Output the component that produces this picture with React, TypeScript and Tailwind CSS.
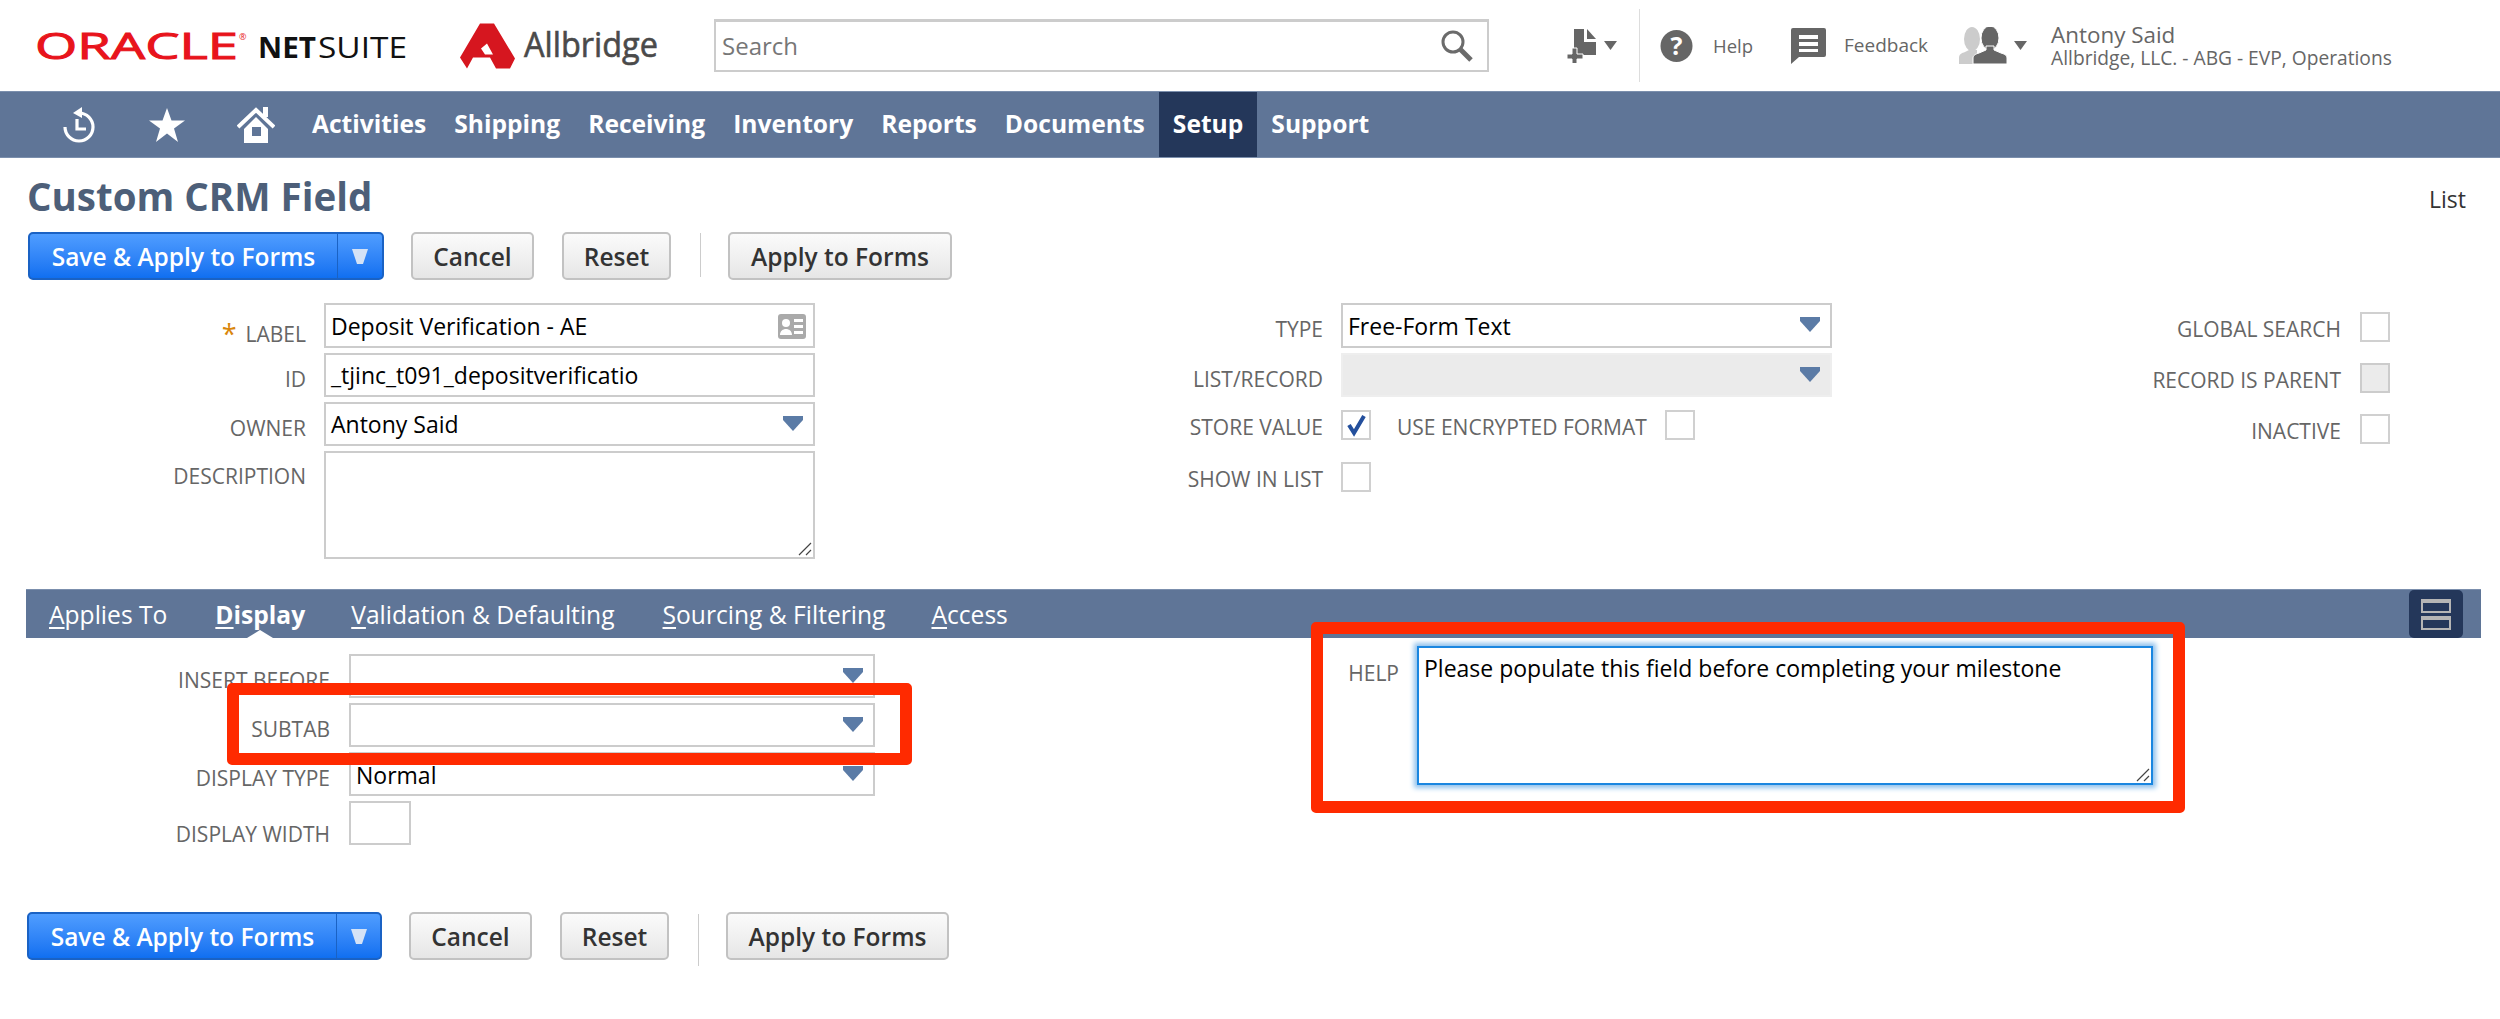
import React from "react";

const navItems = ["Activities", "Shipping", "Receiving", "Inventory", "Reports", "Documents", "Setup", "Support"];

function Caret() {
  return (
    <svg width="22" height="15" viewBox="0 0 22 15" className="absolute right-[9px] top-[12px]">
      <path d="M1 0h20v4l-10 11L1 4z" fill="#5b7ba6" />
    </svg>
  );
}

function Label({ children, className = "" }: { children: React.ReactNode; className?: string }) {
  return <div className={`text-right text-[21px] leading-[26px] text-[#666666] whitespace-nowrap ${className}`}>{children}</div>;
}

function Field({ value, select, disabled, className = "" }: { value?: string; select?: boolean; disabled?: boolean; className?: string }) {
  return (
    <div
      className={`relative h-[44px] w-[491px] border-2 pl-[5px] text-[23px] text-black ${disabled ? "border-[#eeeeee] bg-[#ebebeb]" : "border-[#cccccc] bg-white"} ${className}`}
    >
      {value}
      {select && <Caret />}
    </div>
  );
}

function Checkbox({ checked, disabled }: { checked?: boolean; disabled?: boolean }) {
  return (
    <div className={`relative h-[30px] w-[30px] shrink-0 border-2 ${disabled ? "border-[#cccccc] bg-[#ebebeb]" : "border-[#d0d0d0] bg-white"}`}>
      {checked && (
        <svg width="24" height="24" viewBox="0 0 24 24" className="absolute left-[1px] top-[1px]">
          <path d="M5 12l5 8L20 3" fill="none" stroke="#234f9c" strokeWidth="4" />
        </svg>
      )}
    </div>
  );
}

function Resizer() {
  return (
    <svg width="14" height="14" viewBox="0 0 14 14" className="absolute bottom-[1px] right-[1px]">
      <path d="M1 13L13 1M8 13l5-5" stroke="#444444" strokeWidth="1.2" />
    </svg>
  );
}

function Buttons({ bottom }: { bottom?: boolean }) {
  const gray = "flex h-[48px] items-center justify-center rounded-[5px] border-2 border-[#c2c2c2] bg-gradient-to-b from-[#fbfbfb] to-[#e6e6e6] pt-[2px] text-[24.500px] font-semibold text-[#333333]";
  return (
    <div className={`flex items-start ${bottom ? "pl-[27px]" : "pl-[28px]"}`}>
      <div className={`flex h-[48px] items-stretch rounded-[5px] border-2 border-[#1a62c4] bg-gradient-to-b from-[#4f9dff] to-[#0f6ff0] text-white ${bottom ? "w-[355px]" : "w-[356px]"}`}>
        <div className="flex w-[307px] items-center justify-center pt-[2px] text-[24.500px] font-semibold">Save &amp; Apply to Forms</div>
        <div className="flex flex-1 items-center justify-center border-l border-[#1a62c4]">
          <svg width="16" height="15" viewBox="0 0 16 15"><path d="M0 0h16l-5 15H5z" fill="#d4e2f6" /></svg>
        </div>
      </div>
      <div className={`ml-[27px] w-[123px] ${gray}`}>Cancel</div>
      <div className="w-[28px]" />
      <div className={`w-[109px] ${gray}`}>Reset</div>
      <div className={`ml-[29px] w-px bg-[#cccccc] ${bottom ? "mt-[2px] h-[52px]" : "mt-[1px] h-[44px]"}`} />
      <div className={`ml-[27px] ${bottom ? "w-[223px]" : "w-[224px]"} ${gray}`}>Apply to Forms</div>
    </div>
  );
}

function Tab({ first, rest, active, className = "" }: { first: string; rest: string; active?: boolean; className?: string }) {
  return (
    <div className={`relative whitespace-nowrap pt-[2px] text-[24.600px] text-white ${active ? "font-bold" : ""} ${className}`}>
      <span className="underline underline-offset-[3px]">{first}</span>
      {rest}
    </div>
  );
}

export default function App() {
  return (
    <div className="h-[1019px] w-[2500px] overflow-hidden bg-white font-['Open_Sans',sans-serif]">
      {/* top bar */}
      <div className="flex h-[91px] items-center">
        <svg width="376" height="60" viewBox="0 0 376 60" className="ml-[35px]">
          <text x="0" y="43" fontSize="37" textLength="203" lengthAdjust="spacingAndGlyphs" fill="#e8141c" stroke="#e8141c" strokeWidth="1">ORACLE</text>
          <text x="204" y="24" fontSize="9" fill="#e8141c">®</text>
          <text x="223" y="42" fontSize="29" fontWeight="700" textLength="58" lengthAdjust="spacingAndGlyphs" fill="#111111">NET</text>
          <text x="283" y="42" fontSize="29" textLength="89" lengthAdjust="spacingAndGlyphs" fill="#111111">SUITE</text>
        </svg>
        <svg width="198" height="60" viewBox="0 0 198 60" className="ml-[49px]">
          <path d="M20 7.500h14l21 35-5 10H36l-6-11H13l-6 11-7-11z M21 32.500l6-5 6 11h-8z" fill="#d6161f" fillRule="evenodd" />
          <text x="64" y="41" fontSize="34" textLength="134" lengthAdjust="spacingAndGlyphs" fill="#4a4a4a" stroke="#4a4a4a" strokeWidth="0.6">Allbridge</text>
        </svg>
        <div className="ml-[56px] flex h-[53px] w-[775px] items-center justify-between border-2 border-t-[3px] border-[#cccccc] pl-[6px] pr-[13px] text-[24px] text-[#777777]">
          <span>Search</span>
          <svg width="34" height="34" viewBox="0 0 34 34" fill="none" stroke="#6b6b6b">
            <circle cx="13" cy="13" r="10" strokeWidth="3" />
            <path d="M20 20l11 11" strokeWidth="5" />
          </svg>
        </div>
        <svg width="30" height="34" viewBox="0 0 30 34" className="ml-[78px]">
          <path d="M7 0h10v13h12v13H7z" fill="#666666" />
          <path d="M20 0l9 10h-9z" fill="#666666" />
          <path d="M5 19h5v6h6v5h-6v5H5v-5H0v-5h5z" fill="#666666" stroke="#ffffff" strokeWidth="1" />
        </svg>
        <svg width="13" height="9" viewBox="0 0 13 9" fill="#666666" className="ml-[7px]"><path d="M0 0h13L6.5 9z" /></svg>
        <div className="ml-[22px] h-[73px] w-px bg-[#dddddd]" />
        <svg width="33" height="32" viewBox="0 0 33 32" className="ml-[20px]">
          <circle cx="16.5" cy="16" r="16" fill="#666666" />
          <text x="16.5" y="25" fontSize="25" fontWeight="700" textAnchor="middle" fill="#ffffff">?</text>
        </svg>
        <div className="ml-[20px] text-[18.500px] text-[#666666]">Help</div>
        <svg width="35" height="36" viewBox="0 0 35 36" className="ml-[38px]">
          <path d="M2 0h31a2 2 0 012 2v25a2 2 0 01-2 2H8l-8 7V2a2 2 0 012-2z" fill="#666666" />
          <path d="M8 7h19v4H8zM8 14h19v4H8zM8 21h19v3H8z" fill="#ffffff" />
        </svg>
        <div className="ml-[18px] text-[19px] text-[#666666]">Feedback</div>
        <svg width="48" height="38" viewBox="0 0 48 38" className="ml-[31px]">
          <ellipse cx="13" cy="12" rx="8" ry="12" fill="#cccccc" />
          <path d="M0 37v-6c0-4 3-5 6-6l4-2h8v14z" fill="#cccccc" />
          <ellipse cx="31" cy="11" rx="9" ry="12" fill="#666666" stroke="#ffffff" strokeWidth="1" />
          <path d="M14 37v-6c0-3 3-4 6-5l7-3v-4h8v4l7 3c3 1 6 2 6 5v6z" fill="#666666" stroke="#ffffff" strokeWidth="1" />
        </svg>
        <svg width="13" height="9" viewBox="0 0 13 9" fill="#666666" className="ml-[7px]"><path d="M0 0h13L6.5 9z" /></svg>
        <div className="ml-[24px] flex flex-col text-[#666666]">
          <div className="text-[22.400px] leading-[24px]">Antony Said</div>
          <div className="text-[19.200px] leading-[22px]">Allbridge, LLC. - ABG - EVP, Operations</div>
        </div>
      </div>

      {/* main nav */}
      <div className="flex h-[67px] items-stretch border-y border-[#7b8fad] bg-[#5f7597]">
        <div className="flex w-[298px] items-center pl-[63px]">
          <svg width="32" height="36" viewBox="0 0 32 36" fill="none" stroke="#ffffff" strokeWidth="3.2">
            <path d="M16 6a14 14 0 11-14 14" />
            <path d="M19 0l-9 6 9 5z" fill="#ffffff" stroke="none" />
            <path d="M14 12v10h9" />
          </svg>
          <svg width="36" height="34" viewBox="0 0 36 34" fill="#ffffff" className="ml-[54px]">
            <path d="M18 0l4.500 12.500H36L25 20.500 29 34 18 25.500 7 34l4-13.500L0 12.500h13.500z" />
          </svg>
          <svg width="38" height="36" viewBox="0 0 38 36" className="ml-[52px]">
            <path d="M26 0h5v10h-5z" fill="#ffffff" />
            <path d="M1 20L19 3l18 17" fill="none" stroke="#ffffff" strokeWidth="4" />
            <path d="M7 22L19 10l12 12v14H7z" fill="#ffffff" />
            <path d="M15 20h9v9h-9z" fill="#5f7597" />
          </svg>
        </div>
        {navItems.map((item) => (
          <div
            key={item}
            className={`flex items-center px-[14px] text-[24.600px] font-bold text-white ${item === "Setup" ? "bg-[#24375a]" : ""}`}
          >
            {item}
          </div>
        ))}
      </div>

      {/* title */}
      <div className="flex h-[74px] justify-between pl-[27px] pr-[34px] pt-[12px]">
        <div className="text-[38.500px] font-bold leading-[52px] text-[#4d5f79]">Custom CRM Field</div>
        <div className="pt-[14px] text-[23px] leading-[30px] text-[#333333]">List</div>
      </div>

      <Buttons />

      {/* primary fields */}
      <div className="mt-[23px] flex">
        <div className="flex w-[815px] flex-col gap-[5px]">
          <div className="flex gap-[18px]">
            <Label className="w-[306px] pt-[17px]"><span className="mr-[9px] align-[-2px] text-[27px] leading-none text-[#d9860b]">*</span>LABEL</Label>
            <Field value="Deposit Verification - AE" className="h-[45px] leading-[42px]" />
            <svg width="28" height="25" viewBox="0 0 28 25" className="relative -ml-[55px] mt-[11px]">
              <rect width="28" height="25" rx="3" fill="#aaaaaa" />
              <circle cx="8" cy="9" r="4" fill="#ffffff" />
              <path d="M2 21c0-4 3-6 6-6s6 2 6 6zM16 5h9v3h-9zM16 11h9v3h-9zM16 17h9v3h-9z" fill="#ffffff" />
            </svg>
          </div>
          <div className="flex gap-[18px]">
            <Label className="w-[306px] pt-[13px]">ID</Label>
            <Field value="_tjinc_t091_depositverificatio" className="leading-[40px]" />
          </div>
          <div className="flex gap-[18px]">
            <Label className="w-[306px] pt-[13px]">OWNER</Label>
            <Field value="Antony Said" select className="leading-[40px]" />
          </div>
          <div className="flex gap-[18px]">
            <Label className="w-[306px] pt-[12px]">DESCRIPTION</Label>
            <div className="relative h-[108px] w-[491px] border-2 border-[#cccccc]">
              <Resizer />
            </div>
          </div>
        </div>

        <div className="ml-[185px] flex w-[832px] flex-col">
          <div className="flex gap-[18px]">
            <Label className="w-[323px] pt-[13px]">TYPE</Label>
            <Field value="Free-Form Text" select className="h-[45px] leading-[42px]" />
          </div>
          <div className="mt-[5px] flex gap-[18px]">
            <Label className="w-[323px] pt-[13px]">LIST/RECORD</Label>
            <Field select disabled />
          </div>
          <div className="mt-[13px] flex h-[30px]">
            <Label className="w-[323px] pt-[4px]">STORE VALUE</Label>
            <div className="ml-[18px]"><Checkbox checked /></div>
            <Label className="ml-[26px] pt-[4px]">USE ENCRYPTED FORMAT</Label>
            <div className="ml-[18px]"><Checkbox /></div>
          </div>
          <div className="mt-[22px] flex h-[30px] gap-[18px]">
            <Label className="w-[323px] pt-[4px]">SHOW IN LIST</Label>
            <Checkbox />
          </div>
        </div>

        <div className="flex w-[558px] flex-col gap-[21px] pt-[9px]">
          {[
            { label: "GLOBAL SEARCH" },
            { label: "RECORD IS PARENT", disabled: true },
            { label: "INACTIVE" },
          ].map((row) => (
            <div key={row.label} className="flex h-[30px] justify-end gap-[19px]">
              <Label className="pt-[4px]">{row.label}</Label>
              <Checkbox disabled={row.disabled} />
            </div>
          ))}
        </div>
      </div>

      {/* subtabs */}
      <div className="relative ml-[26px] mt-[30px] flex h-[49px] w-[2455px] items-center border-t border-[#7b8fad] bg-[#5f7597] pl-[23px]">
        <Tab first="A" rest="pplies To" />
        <Tab first="D" rest="isplay" active className="ml-[48px]" />
        <Tab first="V" rest="alidation &amp; Defaulting" className="ml-[46px]" />
        <Tab first="S" rest="ourcing &amp; Filtering" className="ml-[48px]" />
        <Tab first="A" rest="ccess" className="ml-[46px]" />
        <div className="absolute bottom-0 left-[221px] h-0 w-0 border-x-[13px] border-b-[8px] border-x-transparent border-b-white" />
        <div className="absolute right-[18px] top-0 flex h-[48px] w-[54px] flex-col items-center justify-center gap-[3px] rounded-[5px] bg-[#24375a]">
          <div className="h-[14px] w-[30px] border-2 border-t-[4px] border-[#b5b5b5]" />
          <div className="h-[14px] w-[30px] border-2 border-t-[4px] border-[#b5b5b5]" />
        </div>
      </div>

      {/* subtab content */}
      <div className="relative flex">
        <div className="flex w-[875px] flex-col gap-[5px] pt-[16px]">
          <div className="flex gap-[19px]">
            <Label className="w-[330px] pt-[13px]">INSERT BEFORE</Label>
            <Field select className="w-[526px]" />
          </div>
          <div className="flex gap-[19px]">
            <Label className="w-[330px] pt-[13px]">SUBTAB</Label>
            <Field select className="w-[526px]" />
          </div>
          <div className="flex gap-[19px]">
            <Label className="w-[330px] pt-[13px]">DISPLAY TYPE</Label>
            <Field value="Normal" select className="w-[526px] leading-[42px]" />
          </div>
          <div className="flex gap-[19px]">
            <Label className="w-[330px] pt-[20px]">DISPLAY WIDTH</Label>
            <div className="h-[44px] w-[62px] border-2 border-[#cccccc]" />
          </div>
        </div>
        <div className="ml-[460px] flex gap-[18px] pt-[8px]">
          <Label className="w-[64px] pt-[14px]">HELP</Label>
          <div className="relative h-[139px] w-[736px] border-2 border-[#1a86e0] pl-[5px] pt-[5px] text-[23px] leading-[30px] text-black shadow-[0_0_5px_3px_#8fc0ec]">
            Please populate this field before completing your milestone
            <Resizer />
          </div>
        </div>
        <div className="absolute left-[227px] top-[45px] h-[82px] w-[685px] rounded-[5px] border-[12px] border-[#ff2a00]" />
        <div className="absolute left-[1311px] top-[-16px] h-[191px] w-[874px] rounded-[5px] border-[12px] border-[#ff2a00]" />
      </div>

      <div className="mt-[65px]">
        <Buttons bottom />
      </div>
    </div>
  );
}
